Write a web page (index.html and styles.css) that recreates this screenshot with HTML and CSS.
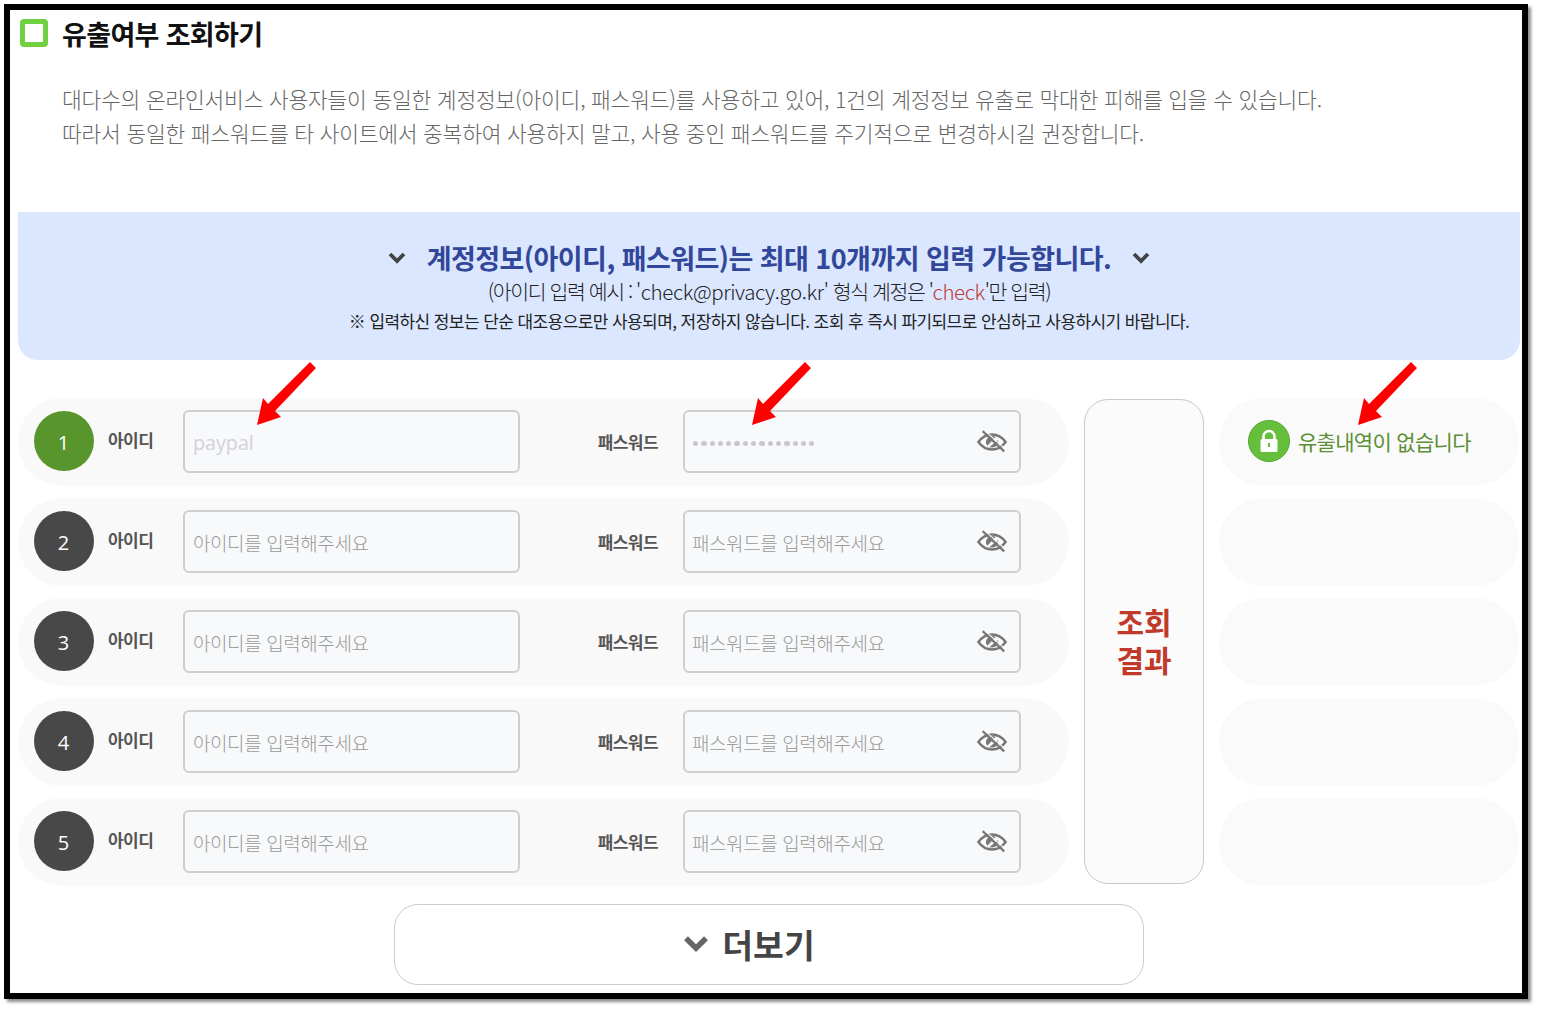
FILE: index.html
```html
<!DOCTYPE html>
<html lang="ko">
<head>
<meta charset="utf-8">
<title>유출여부 조회하기</title>
<link rel="stylesheet" href="styles.css">
</head>
<body>
<svg width="0" height="0" class="defs">
  <defs>
    <symbol id="eye" viewBox="0 0 32 24">
      <path d="M1.500 12.500C5.500 7 10 4.500 16 4.500S26.500 7 30.500 12.500C26.500 18 22 20.500 16 20.500S5.500 18 1.500 12.500Z" fill="none" stroke="currentColor" stroke-width="2.600"/>
      <path d="M9.500 13.500c0-4.500 3-7.500 7.500-7.500l3 1-9 9.500zM22.500 10.500c1 4.500-2.500 8-6.500 8l-3-.5z" fill="currentColor"/>
      <path d="M6 1 29 22.500" fill="none" stroke="currentColor" stroke-width="2.400"/>
      <path d="M9 1 31 21" fill="none" stroke="#f8f9fb" stroke-width="1.200"/>
    </symbol>
    <symbol id="chev" viewBox="0 0 18 14">
      <path d="M2 3l7 7 7-7" fill="none" stroke="currentColor" stroke-width="3.800"/>
    </symbol>
    <symbol id="arrow" viewBox="0 0 60 64">
      <path d="M56 2 62 8 21 51 27 57 3 65 9 38 14 44Z" fill="#ff0000" transform="translate(-2 -2)"/>
    </symbol>
  </defs>
</svg>
<main class="frame">
  <h1 class="title"><span class="title-mark"></span>유출여부 조회하기</h1>
  <p class="intro">대다수의 온라인서비스 사용자들이 동일한 계정정보(아이디, 패스워드)를 사용하고 있어, 1건의 계정정보 유출로 막대한 피해를 입을 수 있습니다.<br>따라서 동일한 패스워드를 타 사이트에서 중복하여 사용하지 말고, 사용 중인 패스워드를 주기적으로 변경하시길 권장합니다.</p>

  <section class="notice">
    <div class="notice-head">
      <svg class="notice-chev"><use href="#chev"/></svg>
      <strong>계정정보(아이디, 패스워드)는 최대 10개까지 입력 가능합니다.</strong>
      <svg class="notice-chev"><use href="#chev"/></svg>
    </div>
    <p class="notice-sub">(아이디 입력 예시 : <span class="latin">'check@privacy.go.kr'</span> 형식 계정은 '<span class="red latin">check</span>'만 입력)</p>
    <p class="notice-small">※ 입력하신 정보는 단순 대조용으로만 사용되며, 저장하지 않습니다. 조회 후 즉시 파기되므로 안심하고 사용하시기 바랍니다.</p>
  </section>

  <section class="board">
    <div class="rows">
      <div class="row">
        <span class="num num-on">1</span>
        <label class="lbl lbl-id">아이디</label>
        <div class="field"><span class="val">paypal</span></div>
        <label class="lbl lbl-pw">패스워드</label>
        <div class="field pw"><span class="dots"><i></i><i></i><i></i><i></i><i></i><i></i><i></i><i></i><i></i><i></i><i></i><i></i><i></i><i></i><i></i></span><svg class="eye"><use href="#eye"/></svg></div>
      </div>
      <div class="row">
        <span class="num">2</span>
        <label class="lbl lbl-id">아이디</label>
        <div class="field"><span class="ph">아이디를 입력해주세요</span></div>
        <label class="lbl lbl-pw">패스워드</label>
        <div class="field pw"><span class="ph">패스워드를 입력해주세요</span><svg class="eye"><use href="#eye"/></svg></div>
      </div>
      <div class="row">
        <span class="num">3</span>
        <label class="lbl lbl-id">아이디</label>
        <div class="field"><span class="ph">아이디를 입력해주세요</span></div>
        <label class="lbl lbl-pw">패스워드</label>
        <div class="field pw"><span class="ph">패스워드를 입력해주세요</span><svg class="eye"><use href="#eye"/></svg></div>
      </div>
      <div class="row">
        <span class="num">4</span>
        <label class="lbl lbl-id">아이디</label>
        <div class="field"><span class="ph">아이디를 입력해주세요</span></div>
        <label class="lbl lbl-pw">패스워드</label>
        <div class="field pw"><span class="ph">패스워드를 입력해주세요</span><svg class="eye"><use href="#eye"/></svg></div>
      </div>
      <div class="row">
        <span class="num">5</span>
        <label class="lbl lbl-id">아이디</label>
        <div class="field"><span class="ph">아이디를 입력해주세요</span></div>
        <label class="lbl lbl-pw">패스워드</label>
        <div class="field pw"><span class="ph">패스워드를 입력해주세요</span><svg class="eye"><use href="#eye"/></svg></div>
      </div>
    </div>
    <button class="check" type="button">조회<br>결과</button>
    <div class="results">
      <div class="result result-ok">
        <span class="lock">
          <svg viewBox="0 0 42 42" width="42" height="42"><circle cx="21" cy="21" r="20.500" fill="#66bf3c" stroke="#55a832"/><path d="M15.500 20v-3.500a5.500 5.500 0 0 1 11 0V20" fill="none" stroke="#fff" stroke-width="2.600"/><rect x="12.500" y="19" width="17" height="13" rx="1.500" fill="#fff"/><rect x="20" y="23" width="2" height="4" fill="#66bf3c"/></svg>
        </span>
        유출내역이 없습니다
      </div>
      <div class="result"></div>
      <div class="result"></div>
      <div class="result"></div>
      <div class="result"></div>
    </div>
  </section>

  <div class="more-wrap">
    <button class="more" type="button"><svg class="more-chev"><use href="#chev"/></svg>더보기</button>
  </div>

  <svg class="arrow arrow-a"><use href="#arrow"/></svg>
  <svg class="arrow arrow-b"><use href="#arrow"/></svg>
  <svg class="arrow arrow-c"><use href="#arrow"/></svg>
</main>
</body>
</html>
```
FILE: styles.css
```css
* { box-sizing: border-box; }
html, body { margin: 0; height: 100%; background: #fff; }
body {
  padding: 4px 0 0 4px;
  font-family: "Noto Sans CJK KR", "Noto Sans", sans-serif;
  color: #333;
}
.defs { position: absolute; }
.frame {
  position: relative;
  width: 1524px;
  height: 995px;
  border: 6px solid #000;
  box-shadow: 3px 3px 3px rgba(0, 0, 0, .45);
  background: #fff;
  padding: 0 2px 0 8px;
}
.title {
  display: flex;
  align-items: center;
  height: 46px;
  margin: 0;
  font-size: 27px;
  font-weight: 700;
  letter-spacing: -.65px;
  color: #111;
}
.title-mark {
  width: 28px;
  height: 28px;
  margin: 0 14px 0 2px;
  border: 5px solid #6fd13f;
  border-radius: 4px;
}
.intro {
  margin: 26px 0 0 44px;
  height: 130px;
  font-size: 21.500px;
  font-weight: 300;
  line-height: 34px;
  letter-spacing: -.24px;
  color: #666;
}
.notice {
  height: 148px;
  padding-top: 23px;
  background: #dbe7ff;
  border-radius: 0 0 20px 20px;
  text-align: center;
}
.notice-head {
  display: flex;
  justify-content: center;
  align-items: center;
  gap: 21px;
  height: 44px;
  font-size: 27px;
  letter-spacing: -.55px;
  color: #32469a;
}
.notice-head strong { font-weight: 700; }
.notice-chev { width: 18px; height: 14px; margin-top: 1px; color: #444; }
.notice-sub {
  margin: 0;
  font-size: 20.500px;
  font-weight: 300;
  line-height: 24px;
  letter-spacing: -1.400px;
  color: #222;
}
.latin { letter-spacing: -.4px; }
.red { color: #c0392b; }
.notice-small {
  margin: 3px 0 0;
  font-size: 17px;
  font-weight: 400;
  line-height: 30px;
  letter-spacing: -.58px;
  color: #222;
}
.board {
  display: flex;
  gap: 15px;
  margin-top: 38px;
}
.rows, .results {
  display: flex;
  flex-direction: column;
  gap: 12px;
}
.rows { width: 1051px; }
.results { width: 300px; }
.row {
  display: flex;
  align-items: center;
  height: 88px;
  padding-left: 16px;
  background: #f9f9f9;
  border-radius: 44px;
}
.num {
  display: flex;
  justify-content: center;
  align-items: center;
  flex: none;
  width: 60px;
  height: 60px;
  margin-top: -3px;
  padding: 4px 1px 0 0;
  background: #484848;
  border-radius: 50%;
  color: #fff;
  font-family: "Open Sans", sans-serif;
  font-size: 20px;
}
.num-on { background: #58952d; }
.lbl {
  flex: none;
  font-size: 17px;
  font-weight: 700;
  letter-spacing: -.55px;
  color: #555;
}
.lbl-id { width: 75px; margin: -6px 0 0 14px; }
.lbl-pw { width: 87px; margin: -2px 25px 0 51px; text-align: right; }
.field {
  display: flex;
  align-items: center;
  justify-content: space-between;
  flex: none;
  width: 337px;
  height: 63px;
  margin-top: -2px;
  padding: 3px 12px 0 8px;
  background: #f8f9fb;
  border: 2px solid #cfcfcf;
  border-radius: 6px;
}
.field.pw { width: 338px; padding-left: 7px; }
.val { font-family: "Open Sans", sans-serif; font-size: 19.700px; color: #d2d2d8; }
.ph { font-size: 19px; font-weight: 300; letter-spacing: -.42px; color: #999; }
.dots { display: flex; gap: 3px; margin: 2px 0 0 1px; }
.dots i { width: 5.300px; height: 5.300px; background: #c8c8cc; border-radius: 50%; }
.eye { width: 30px; height: 23px; margin-top: -2px; color: #777; }
.check {
  flex: none;
  width: 120px;
  height: 485px;
  margin-top: 1px;
  padding: 0 0 4px;
  background: #fbfbfb;
  border: 1.500px solid #c8c8c8;
  border-radius: 24px;
  font-family: inherit;
  font-size: 30px;
  font-weight: 700;
  line-height: 38px;
  color: #c0392b;
}
.result {
  display: flex;
  align-items: center;
  height: 88px;
  padding: 0 0 3px 29px;
  background: #fafafa;
  border-radius: 44px;
  font-size: 21px;
  letter-spacing: -.7px;
  color: #5b8f35;
}
.lock { display: flex; margin-right: 8px; }
.more-wrap { display: flex; margin: 18px 0 0 376px; }
.more {
  display: flex;
  justify-content: center;
  align-items: center;
  gap: 13px;
  width: 750px;
  height: 81px;
  padding: 0 40px 2px 0;
  background: #fff;
  border: 1.500px solid #cccccc;
  border-radius: 24px;
  font-family: inherit;
  font-size: 33.500px;
  font-weight: 700;
  color: #444;
}
.more-chev { width: 26px; height: 20px; color: #666; }
.arrow { position: absolute; width: 60px; height: 64px; }
.arrow-a { left: 246px; top: 352px; }
.arrow-b { left: 741px; top: 352px; }
.arrow-c { left: 1347px; top: 352px; }
```
